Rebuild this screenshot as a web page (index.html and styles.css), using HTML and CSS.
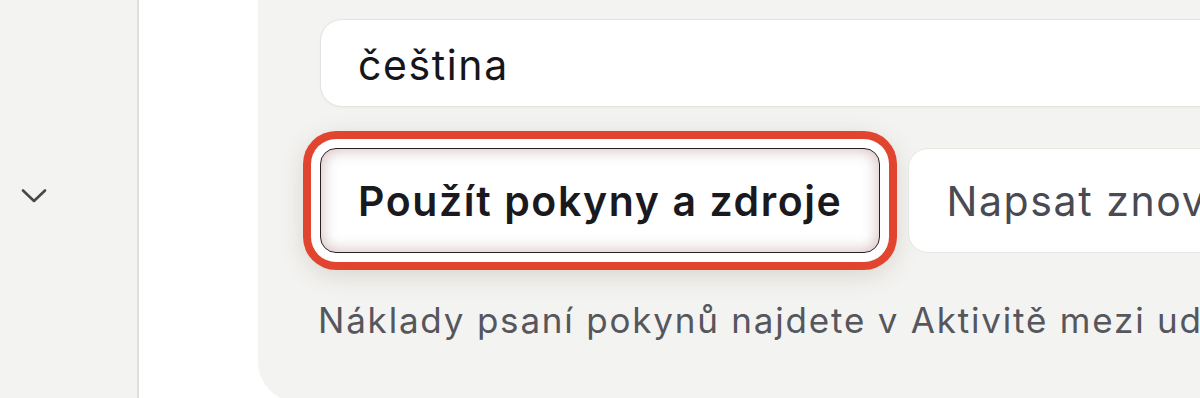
FILE: index.html
```html
<!DOCTYPE html>
<html lang="cs">
<head>
<meta charset="utf-8">
<title>Pokyny</title>
<link rel="stylesheet" href="styles.css">
</head>
<body>
<div class="app">
  <aside class="sidebar">
    <svg class="chevron" width="26" height="16" viewBox="0 0 26 16" aria-hidden="true">
      <path d="M2 2.5 L13 13 L24 2.5" fill="none" stroke="#47474c" stroke-width="2.6" stroke-linecap="round" stroke-linejoin="round"/>
    </svg>
  </aside>
  <div class="gutter"></div>
  <main class="panel">
    <div class="field">čeština</div>
    <div class="actions">
      <button class="btn btn-primary">Použít pokyny a zdroje</button>
      <button class="btn btn-secondary">Napsat znovu</button>
    </div>
    <p class="note">Náklady psaní pokynů najdete v Aktivitě mezi ud</p>
  </main>
</div>
</body>
</html>
```

FILE: styles.css
```css
html, body {
  margin: 0;
  padding: 0;
  background: #ffffff;
  overflow: hidden;
}
body {
  width: 1200px;
  height: 398px;
  font-family: Inter, "Noto Sans", sans-serif;
}
.app {
  display: flex;
  height: 398px;
  overflow: hidden;
}
.sidebar {
  flex: 0 0 139px;
  background: #f3f3f1;
  border-right: 2px solid #dfdfdb;
  padding: 188px 0 0 21px;
  box-sizing: border-box;
}
.chevron {
  display: block;
}
.gutter {
  flex: 0 0 119px;
  background: #ffffff;
}
.panel {
  flex: 0 0 1200px;
  height: 402px;
  background: #f3f3f1;
  border-bottom-left-radius: 40px;
  padding: 19px 0 0 62px;
  box-sizing: border-box;
}
.field {
  box-sizing: border-box;
  width: 1100px;
  height: 88px;
  background: #ffffff;
  border: 1px solid #e3e3e0;
  border-radius: 22px;
  padding: 4px 0 0 37px;
  display: flex;
  align-items: center;
  font-size: 41px;
  letter-spacing: 1.6px;
  color: #16161a;
  box-shadow: 0 1px 3px rgba(0,0,0,0.04);
}
.actions {
  display: flex;
  gap: 28px;
  margin-top: 41px;
}
.btn {
  box-sizing: border-box;
  height: 105px;
  padding: 0 37px;
  font-family: Inter, "Noto Sans", sans-serif;
  font-size: 41px;
  letter-spacing: 1.6px;
  white-space: nowrap;
  background: #ffffff;
  cursor: pointer;
}
.btn-primary {
  flex: 0 0 auto;
  border: 1.5px solid #2a2020;
  border-radius: 16px;
  font-weight: 600;
  color: #1a1a1e;
  box-shadow:
    inset 0 0 16px rgba(150, 90, 90, 0.45),
    0 0 0 9px #ffffff,
    0 0 0 17px #e1452f,
    0 6px 26px 14px rgba(120, 100, 80, 0.24);
}
.btn-secondary {
  flex: 0 0 auto;
  border: 1px solid #e6e6e3;
  border-radius: 20px;
  font-weight: 400;
  color: #4a4a52;
}
.note {
  margin: 46px 0 0 -2px;
  font-size: 35px;
  letter-spacing: 1.8px;
  color: #56565d;
  white-space: nowrap;
}
```
